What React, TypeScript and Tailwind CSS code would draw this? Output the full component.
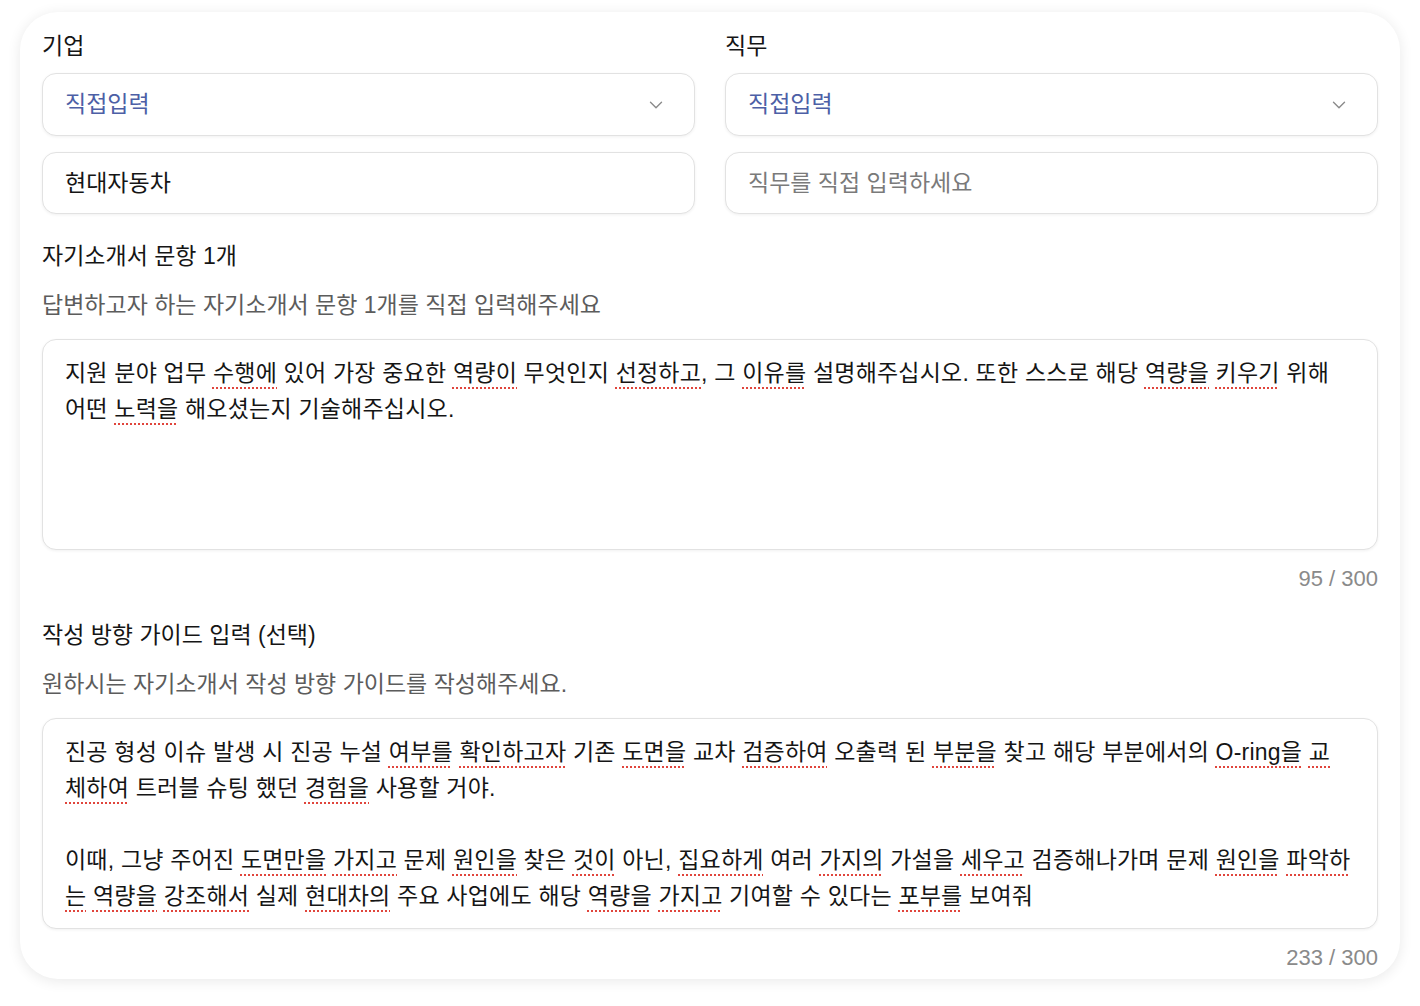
import { ChevronDown } from "lucide-react";

const font = { fontFamily: '"Liberation Sans", "Noto Sans CJK KR", sans-serif' };

// spell-check style marks
function S({ children }: { children: React.ReactNode }) {
  return (
    <span className="underline decoration-dotted decoration-[#e0453c] decoration-2 underline-offset-[6px]">
      {children}
    </span>
  );
}

function Label({ children }: { children: React.ReactNode }) {
  return <div className="text-[23px] leading-[30px] text-[#151515]">{children}</div>;
}

function Hint({ children }: { children: React.ReactNode }) {
  return <div className="mt-[19px] text-[23px] leading-[30px] text-[#5c5c5c]">{children}</div>;
}

function Select() {
  return (
    <div className="mt-3 flex h-[63px] items-center justify-between rounded-[14px] border border-[#e2e2e2] bg-white pl-[22px] pr-[27px] shadow-[0_1px_3px_rgba(0,0,0,0.06)]">
      <span className="text-[23px] text-[#4d5fa6]">직접입력</span>
      <ChevronDown className="h-[22px] w-[22px] text-[#8a8a8a]" strokeWidth={1.5} />
    </div>
  );
}

function Input({ value, placeholder }: { value?: string; placeholder?: string }) {
  return (
    <div className="mt-4 flex h-[62px] items-center rounded-[14px] border border-[#e2e2e2] bg-white pl-[22px] shadow-[0_1px_3px_rgba(0,0,0,0.06)]">
      {value ? (
        <span className="text-[23px] text-[#151515]">{value}</span>
      ) : (
        <span className="text-[23px] text-[#7a7a7a]">{placeholder}</span>
      )}
    </div>
  );
}

function Area({ children }: { children: React.ReactNode }) {
  return (
    <div className="mt-[19px] h-[211px] rounded-[14px] border border-[#e2e2e2] bg-white px-[22px] pt-[15px] text-[23px] leading-[36px] tracking-[0.2px] text-[#151515] shadow-[0_1px_3px_rgba(0,0,0,0.06)]">
      {children}
    </div>
  );
}

function Counter({ children }: { children: React.ReactNode }) {
  return <div className="mt-[14px] text-right text-[22px] leading-[30px] text-[#8a8a8a]">{children}</div>;
}

export default function App() {
  return (
    <div className="min-h-screen bg-white px-5 pt-3" style={font}>
      <div className="rounded-[38px] bg-white px-[22px] pb-[6px] pt-[19px] shadow-[0_2px_14px_rgba(0,0,0,0.09)]">
        <div className="grid grid-cols-2 gap-[30px]">
          <div>
            <Label>기업</Label>
            <Select />
            <Input value="현대자동차" />
          </div>
          <div>
            <Label>직무</Label>
            <Select />
            <Input placeholder="직무를 직접 입력하세요" />
          </div>
        </div>

        <div className="mt-[27px]">
          <Label>자기소개서 문항 1개</Label>
          <Hint>답변하고자 하는 자기소개서 문항 1개를 직접 입력해주세요</Hint>
          <Area>
            <div className="whitespace-nowrap">
              지원 분야 업무 <S>수행에</S> 있어 가장 중요한 <S>역량이</S> 무엇인지 <S>선정하고</S>, 그 <S>이유를</S> 설명해주십시오. 또한 스스로 해당 <S>역량을</S> <S>키우기</S> 위해
            </div>
            <div className="whitespace-nowrap">
              어떤 <S>노력을</S> 해오셨는지 기술해주십시오.
            </div>
          </Area>
          <Counter>95 / 300</Counter>
        </div>

        <div className="mt-[26px]">
          <Label>작성 방향 가이드 입력 (선택)</Label>
          <Hint>원하시는 자기소개서 작성 방향 가이드를 작성해주세요.</Hint>
          <Area>
            <div className="whitespace-nowrap">
              진공 형성 이슈 발생 시 진공 누설 <S>여부를</S> <S>확인하고자</S> 기존 <S>도면을</S> 교차 <S>검증하여</S> 오출력 된 <S>부분을</S> 찾고 해당 부분에서의 <S>O-ring을</S> <S>교</S>
            </div>
            <div className="whitespace-nowrap">
              <S>체하여</S> 트러블 슈팅 했던 <S>경험을</S> 사용할 거야.
            </div>
            <div className="h-[36px]" />
            <div className="whitespace-nowrap">
              이때, 그냥 주어진 <S>도면만을</S> <S>가지고</S> 문제 <S>원인을</S> 찾은 <S>것이</S> 아닌, <S>집요하게</S> 여러 <S>가지의</S> 가설을 <S>세우고</S> 검증해나가며 문제 <S>원인을</S> <S>파악하</S>
            </div>
            <div className="whitespace-nowrap">
              <S>는</S> <S>역량을</S> <S>강조해서</S> 실제 <S>현대차의</S> 주요 사업에도 해당 <S>역량을</S> <S>가지고</S> 기여할 수 있다는 <S>포부를</S> 보여줘
            </div>
          </Area>
          <Counter>233 / 300</Counter>
        </div>
      </div>
    </div>
  );
}
